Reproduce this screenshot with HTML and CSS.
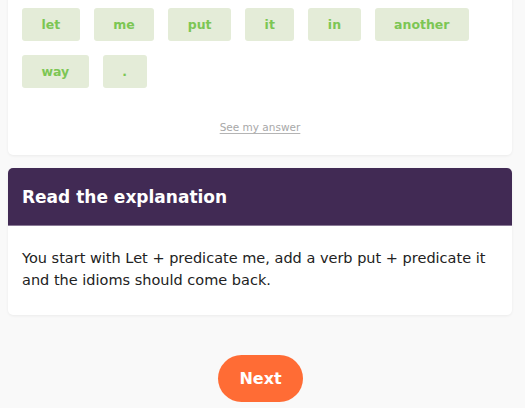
FILE: index.html
```html
<!DOCTYPE html>
<html>
<head>
<meta charset="utf-8">
<link rel="stylesheet" href="styles.css">
</head>
<body>
<div class="page">
  <section class="card words-card">
    <div class="chips">
      <span class="chip">let</span>
      <span class="chip">me</span>
      <span class="chip">put</span>
      <span class="chip">it</span>
      <span class="chip">in</span>
      <span class="chip">another</span>
      <span class="chip">way</span>
      <span class="chip">.</span>
    </div>
    <div class="answer-row"><a class="answer-link">See my answer</a></div>
  </section>
  <section class="card explain-card">
    <h2 class="explain-title">Read the explanation</h2>
    <p class="explain-body">You start with Let + predicate me, add a verb put + predicate it and the idioms should come back.</p>
  </section>
  <div class="actions">
    <button class="next-btn">Next</button>
  </div>
</div>
</body>
</html>
```

FILE: styles.css
```css
html, body {
  margin: 0;
  padding: 0;
  background: #f9f9f9;
  font-family: "DejaVu Sans", sans-serif;
}
.page {
  padding: 0 13px 0 8px;
  display: flex;
  flex-direction: column;
}
.card {
  background: #ffffff;
  border-radius: 5px;
  box-shadow: 0 1px 3px rgba(0,0,0,0.06);
}
.words-card {
  margin-top: -20px;
  padding: 28px 14px 22px 14px;
}
.chips {
  display: flex;
  flex-wrap: wrap;
  gap: 14px;
}
.chip {
  display: inline-flex;
  align-items: center;
  justify-content: center;
  height: 33px;
  padding: 0 19.5px;
  background: #e4ecd8;
  color: #7cc654;
  border-radius: 3px;
  font-size: 12.5px;
  font-weight: bold;
}
.answer-row {
  display: flex;
  justify-content: center;
  margin-top: 33px;
}
.answer-link {
  font-size: 10.5px;
  color: #a8a8a8;
  text-decoration: underline;
  text-decoration-color: #b4b4b4;
  text-underline-offset: 2px;
}
.explain-card {
  margin-top: 13px;
  overflow: hidden;
}
.explain-title {
  margin: 0;
  background: #412a54;
  color: #ffffff;
  font-size: 17px;
  font-weight: bold;
  height: 58px;
  display: flex;
  align-items: center;
  padding: 0 14px;
  border-bottom: 1px solid #8a7a96;
  box-sizing: border-box;
}
.explain-body {
  margin: 0;
  padding: 21px 14px 24px 14px;
  font-size: 14.5px;
  line-height: 22px;
  color: #222222;
}
.actions {
  display: flex;
  justify-content: center;
  margin-top: 40px;
}
.next-btn {
  border: none;
  background: #ff6c35;
  color: #ffffff;
  font-family: "DejaVu Sans", sans-serif;
  font-size: 16px;
  font-weight: bold;
  width: 85px;
  height: 47px;
  border-radius: 24px;
  margin-left: 1px;
}
```
